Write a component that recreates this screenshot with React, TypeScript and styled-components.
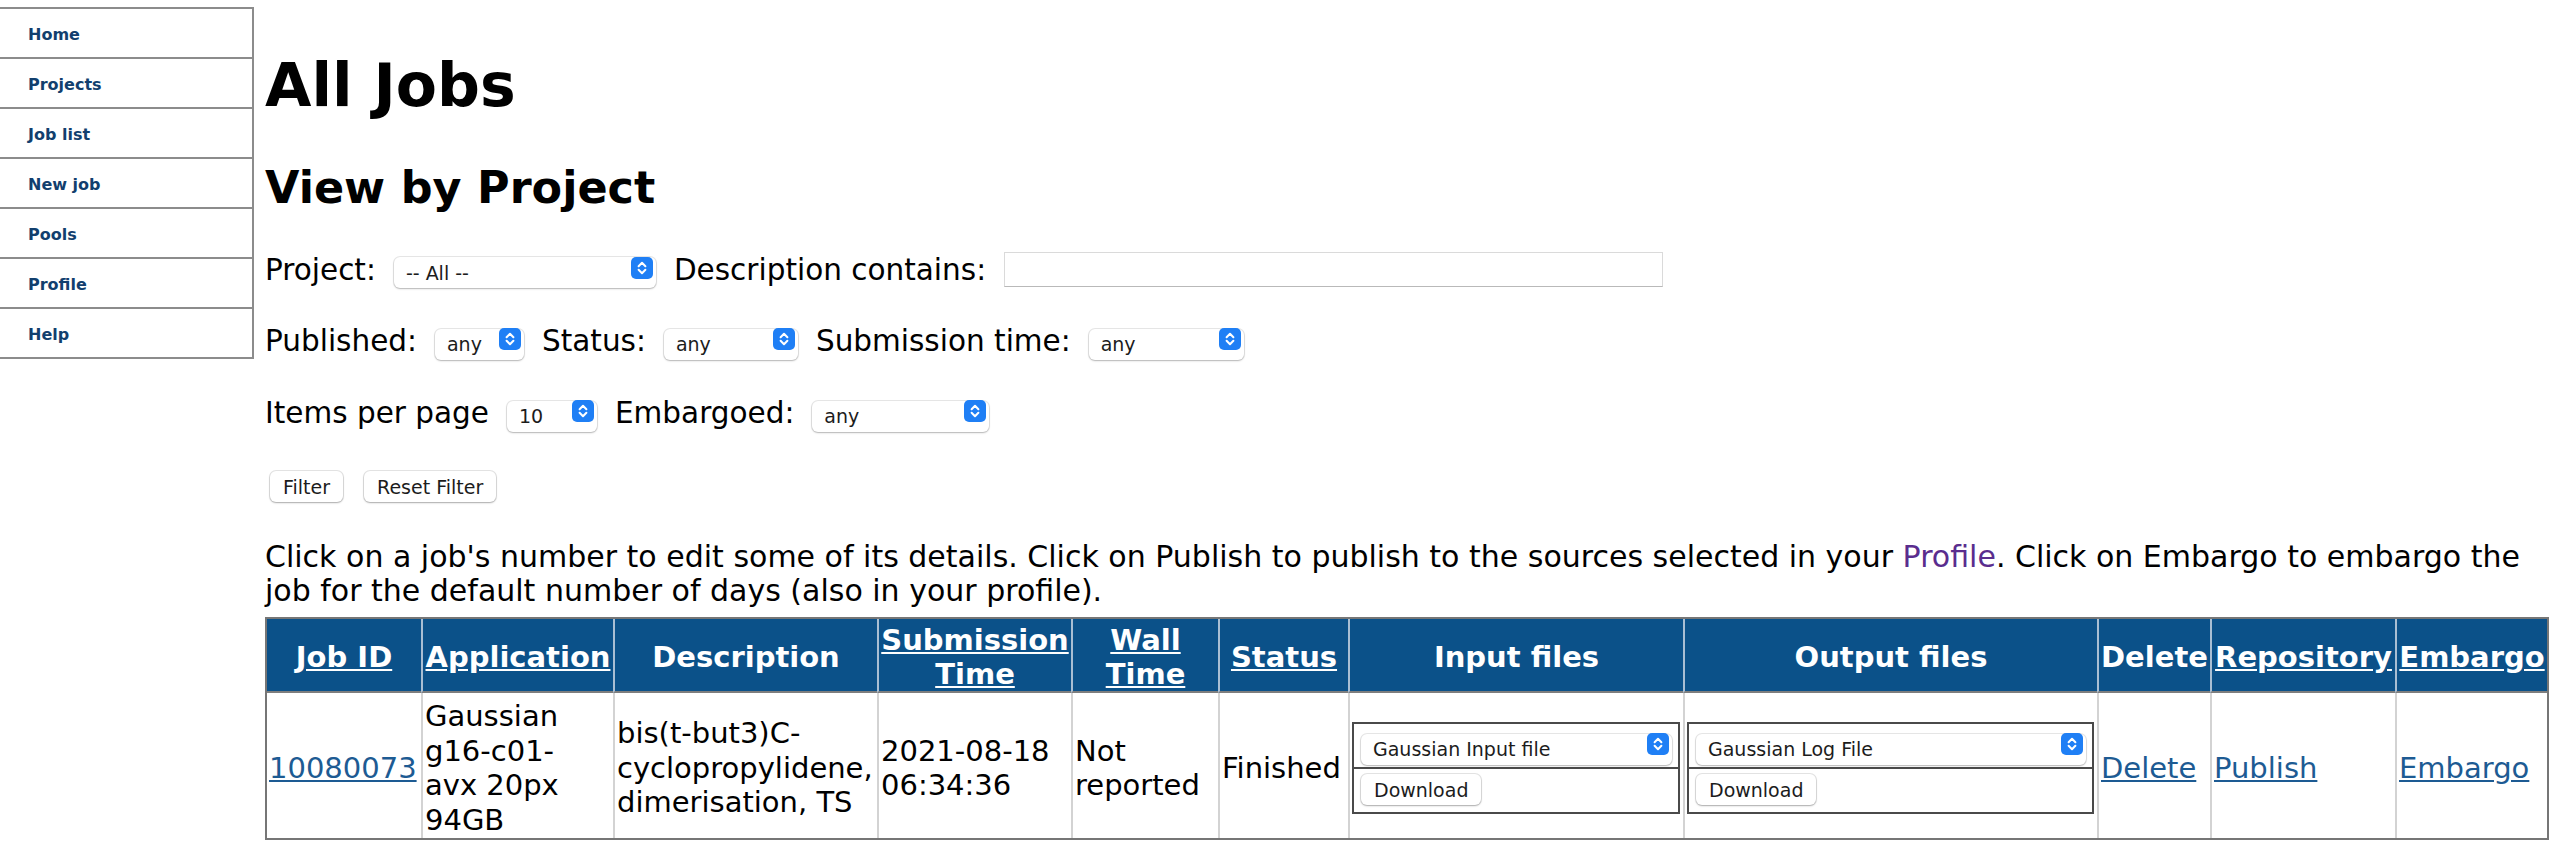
import React from "react";
import styled, { createGlobalStyle } from "styled-components";

const GlobalStyle = createGlobalStyle`
  html, body { margin: 0; padding: 0; background: #ffffff; }
  body {
    font-family: "DejaVu Sans", Verdana, sans-serif;
    color: #000;
    font-size: 29.5px;
  }
`;

const Page = styled.div`
  display: flex;
  align-items: flex-start;
  width: 2560px;
`;

const Nav = styled.nav`
  flex: 0 0 254px;
  margin-top: 7px;
  border-top: 2px solid #8c8c8c;
`;

const NavItem = styled.a`
  display: flex;
  align-items: center;
  box-sizing: border-box;
  height: 50px;
  padding: 3px 0 0 28px;
  border-right: 2px solid #8c8c8c;
  border-bottom: 2px solid #8c8c8c;
  font-size: 16px;
  font-weight: bold;
  color: #123f6e;
  text-decoration: none;
`;

const Main = styled.main`
  flex: 1;
  min-width: 0;
  padding: 0 11px;
`;

const Title = styled.h1`
  margin: 50px 0 0;
  font-size: 60px;
  line-height: 70px;
  font-weight: bold;
`;

const Subtitle = styled.h2`
  margin: 42px 0 0;
  font-size: 44.5px;
  line-height: 52px;
  font-weight: bold;
`;

const Filters = styled.form`
  margin-top: 38px;
`;

const FormRow = styled.div`
  display: flex;
  align-items: baseline;
  gap: 18px;
  height: 36px;
  margin-bottom: 36px;
  font-size: 29.5px;
  line-height: 34px;
`;

const Label = styled.label`
  white-space: nowrap;
`;

const SelectWrap = styled.span<{ $w?: number }>`
  position: relative;
  display: inline-block;
  width: ${(p) => (p.$w ? `${p.$w}px` : "100%")};
  height: 31px;
`;

const Select = styled.select`
  appearance: none;
  -webkit-appearance: none;
  box-sizing: border-box;
  width: 100%;
  height: 31px;
  margin: 0;
  padding: 0 30px 0 12px;
  border: none;
  border-radius: 6px;
  background: #ffffff;
  box-shadow: 0 0 0 1px rgba(0, 0, 0, 0.09), 0 1px 2px rgba(0, 0, 0, 0.22);
  font-family: "DejaVu Sans", Verdana, sans-serif;
  font-size: 19px;
  color: #1c1c1c;
  outline: none;
`;

const Badge = styled.span`
  position: absolute;
  right: 3px;
  top: 4px;
  width: 22px;
  height: 22px;
  border-radius: 5px;
  background: #1f7ff5;
  pointer-events: none;
  display: flex;
  align-items: center;
  justify-content: center;
`;

const TextInput = styled.input`
  box-sizing: border-box;
  width: 659px;
  height: 35px;
  margin: 0;
  padding: 6px 8px 0;
  border: 1px solid #dadada;
  border-bottom-color: #b9b9b9;
  font-family: "DejaVu Sans", Verdana, sans-serif;
  font-size: 19px;
  outline: none;
`;

const ButtonRow = styled.div`
  display: flex;
  gap: 21px;
  padding: 3px 0 0 5px;
`;

const Button = styled.button`
  box-sizing: border-box;
  height: 31px;
  margin: 0;
  padding: 0 13px;
  border: none;
  border-radius: 6px;
  background: #ffffff;
  box-shadow: 0 0 0 1px rgba(0, 0, 0, 0.1), 0 1px 2px rgba(0, 0, 0, 0.25);
  font-family: "DejaVu Sans", Verdana, sans-serif;
  font-size: 19px;
  color: #1c1c1c;
  cursor: pointer;
`;

const Intro = styled.p`
  margin: 38px 0 0;
  font-size: 30px;
  line-height: 34px;
`;

const ProfileLink = styled.a`
  color: #5a2d8e;
  text-decoration: none;
`;

const Table = styled.table`
  margin-top: 9px;
  width: 2284px;
  table-layout: fixed;
  border-collapse: separate;
  border-spacing: 0;
  border: 2px solid #767676;
  font-size: 29px;
  line-height: 34px;
`;

const Th = styled.th<{ $w: number }>`
  box-sizing: border-box;
  width: ${(p) => p.$w}px;
  padding: 4px 1px 0;
  background: #0b5189;
  color: #ffffff;
  font-weight: bold;
  text-align: center;
  vertical-align: middle;
  border-bottom: 2px solid #7e7e7e;
  border-left: 2px solid #a9bed3;
  &:first-child {
    border-left: none;
  }
`;

const HeadLink = styled.a`
  color: #ffffff;
  text-decoration: underline;
`;

const Td = styled.td<{ $padR?: number }>`
  box-sizing: border-box;
  padding: 6px ${(p) => p.$padR ?? 2}px 1px 2px;
  line-height: 34.5px;
  vertical-align: middle;
  text-align: left;
  border-left: 2px solid #d3d3d3;
  &:first-child {
    border-left: none;
  }
`;

const CellLink = styled.a`
  color: #1d5b93;
  text-decoration: underline;
`;

const FileBox = styled.div`
  border: 2px solid #4a4a4a;
  margin-right: 1px;
`;

const FileRow = styled.div`
  display: flex;
  padding: 5px 6px 7px 7px;
  & + & {
    border-top: 2px solid #4a4a4a;
  }
`;

const Chevrons = () => (
  <svg width="22" height="22" viewBox="0 0 22 22" aria-hidden="true">
    <path
      d="M7.6 9.2 L11 5.8 L14.4 9.2 M7.6 12.8 L11 16.2 L14.4 12.8"
      fill="none"
      stroke="#ffffff"
      strokeWidth="2"
      strokeLinecap="round"
      strokeLinejoin="round"
    />
  </svg>
);

const Dropdown: React.FC<{ w?: number; options: string[] }> = ({ w, options }) => (
  <SelectWrap $w={w}>
    <Select defaultValue={options[0]}>
      {options.map((o) => (
        <option key={o}>{o}</option>
      ))}
    </Select>
    <Badge>
      <Chevrons />
    </Badge>
  </SelectWrap>
);

const navItems = ["Home", "Projects", "Job list", "New job", "Pools", "Profile", "Help"];

const columns: { label: string[]; w: number; link: boolean }[] = [
  { label: ["Job ID"], w: 154, link: true },
  { label: ["Application"], w: 192, link: true },
  { label: ["Description"], w: 264, link: false },
  { label: ["Submission", "Time"], w: 194, link: true },
  { label: ["Wall", "Time"], w: 147, link: true },
  { label: ["Status"], w: 130, link: true },
  { label: ["Input files"], w: 335, link: false },
  { label: ["Output files"], w: 414, link: false },
  { label: ["Delete"], w: 113, link: false },
  { label: ["Repository"], w: 185, link: true },
  { label: ["Embargo"], w: 152, link: true },
];

export default function App() {
  return (
    <>
      <GlobalStyle />
      <Page>
        <Nav>
          {navItems.map((n) => (
            <NavItem key={n} href="#">
              {n}
            </NavItem>
          ))}
        </Nav>
        <Main>
          <Title>All Jobs</Title>
          <Subtitle>View by Project</Subtitle>
          <Filters onSubmit={(e) => e.preventDefault()}>
            <FormRow>
              <Label>Project:</Label>
              <Dropdown w={262} options={["-- All --"]} />
              <Label>Description contains:</Label>
              <TextInput type="text" />
            </FormRow>
            <FormRow>
              <Label>Published:</Label>
              <Dropdown w={89} options={["any"]} />
              <Label>Status:</Label>
              <Dropdown w={134} options={["any"]} />
              <Label>Submission time:</Label>
              <Dropdown w={155} options={["any"]} />
            </FormRow>
            <FormRow>
              <Label>Items per page</Label>
              <Dropdown w={90} options={["10"]} />
              <Label>Embargoed:</Label>
              <Dropdown w={177} options={["any"]} />
            </FormRow>
            <ButtonRow>
              <Button type="submit">Filter</Button>
              <Button type="button">Reset Filter</Button>
            </ButtonRow>
          </Filters>
          <Intro>
            Click on a job's number to edit some of its details. Click on Publish to publish to the
            sources selected in your <ProfileLink href="#">Profile</ProfileLink>. Click on Embargo to
            embargo the job for the default number of days (also in your profile).
          </Intro>
          <Table>
            <thead>
              <tr>
                {columns.map((c) => (
                  <Th key={c.label.join(" ")} $w={c.w}>
                    {c.link ? (
                      <HeadLink href="#">
                        {c.label.map((l, i) => (
                          <React.Fragment key={l}>
                            {i > 0 && " "}
                            {l}
                          </React.Fragment>
                        ))}
                      </HeadLink>
                    ) : (
                      c.label.join(" ")
                    )}
                  </Th>
                ))}
              </tr>
            </thead>
            <tbody>
              <tr>
                <Td>
                  <CellLink href="#">10080073</CellLink>
                </Td>
                <Td $padR={12}>Gaussian g16-c01-avx 20px 94GB</Td>
                <Td>bis(t-but3)C-cyclopropylidene, dimerisation, TS</Td>
                <Td>2021-08-18 06:34:36</Td>
                <Td>Not reported</Td>
                <Td>Finished</Td>
                <Td>
                  <FileBox>
                    <FileRow>
                      <Dropdown options={["Gaussian Input file"]} />
                    </FileRow>
                    <FileRow>
                      <Button type="button">Download</Button>
                    </FileRow>
                  </FileBox>
                </Td>
                <Td>
                  <FileBox>
                    <FileRow>
                      <Dropdown options={["Gaussian Log File"]} />
                    </FileRow>
                    <FileRow>
                      <Button type="button">Download</Button>
                    </FileRow>
                  </FileBox>
                </Td>
                <Td>
                  <CellLink href="#">Delete</CellLink>
                </Td>
                <Td>
                  <CellLink href="#">Publish</CellLink>
                </Td>
                <Td>
                  <CellLink href="#">Embargo</CellLink>
                </Td>
              </tr>
            </tbody>
          </Table>
        </Main>
      </Page>
    </>
  );
}
